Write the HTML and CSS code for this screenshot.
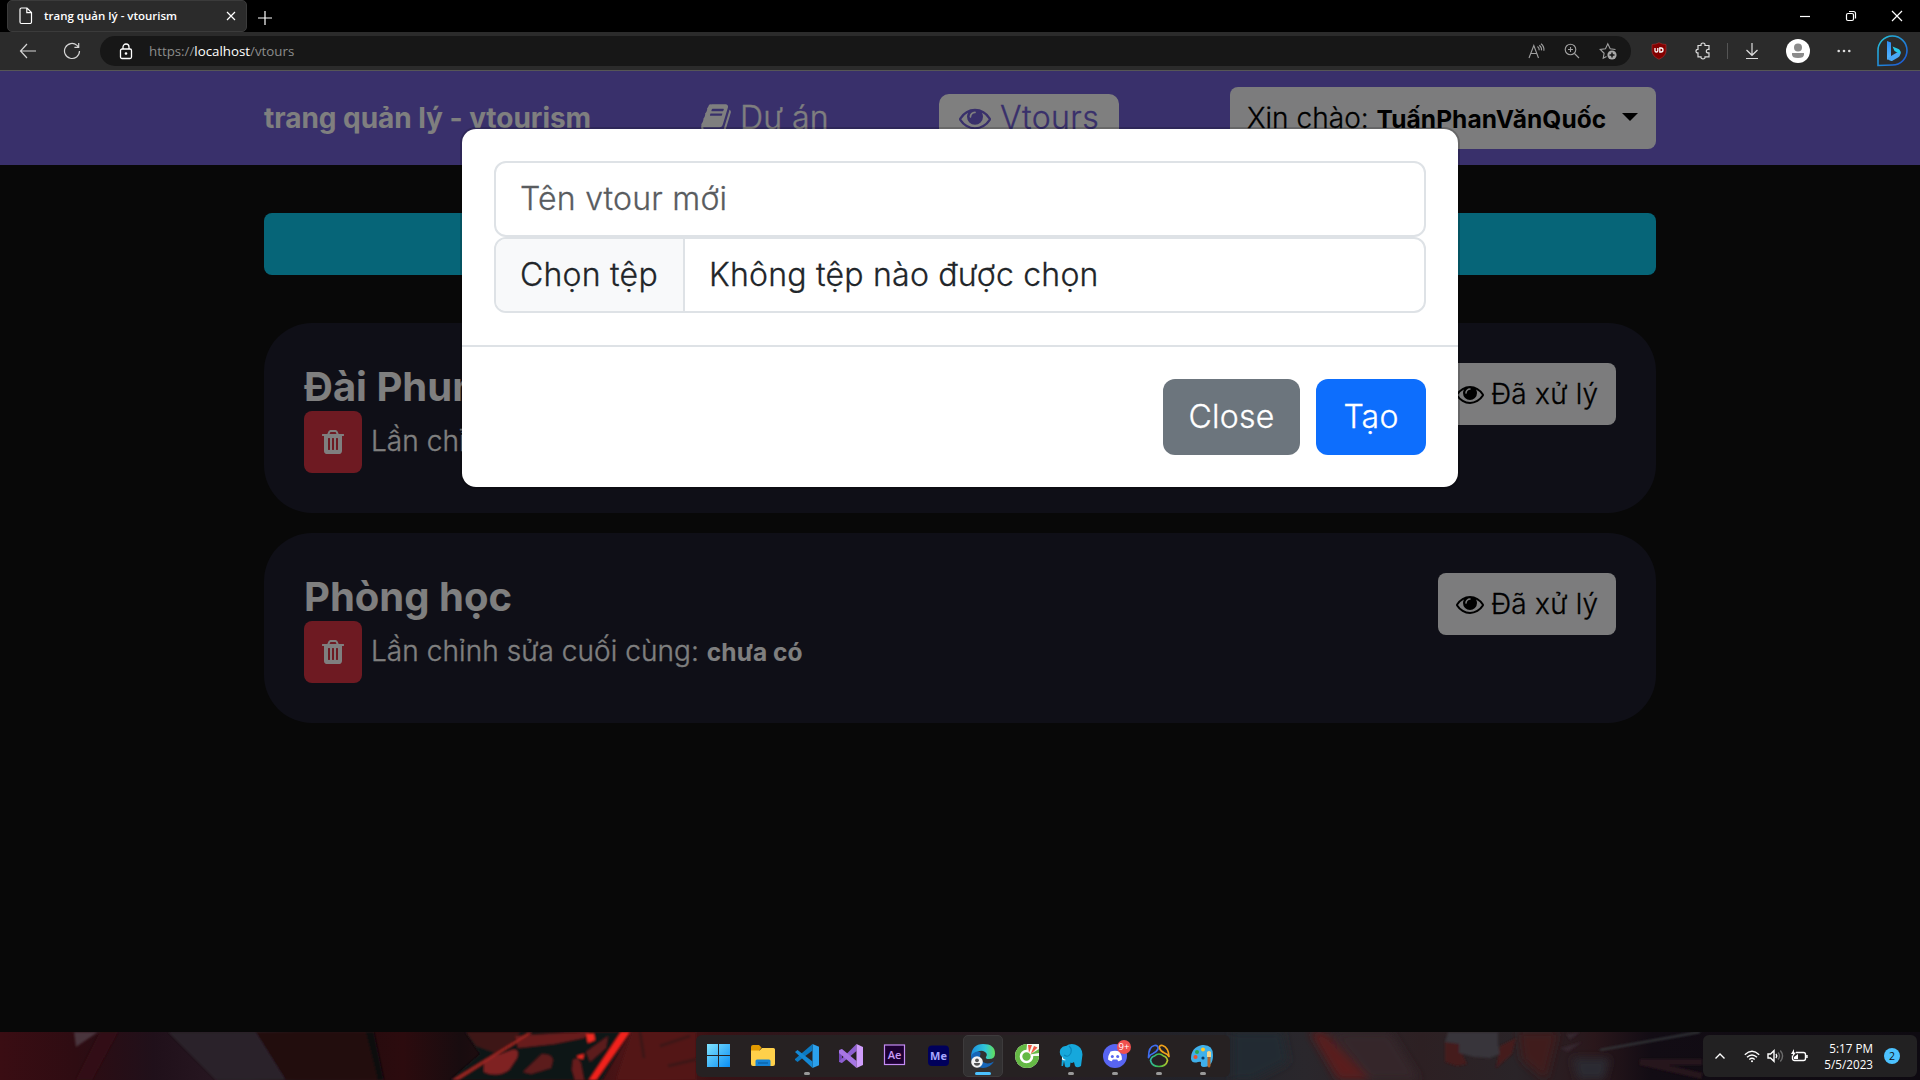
FILE: index.html
```
<!DOCTYPE html>
<html lang="vi">
<head>
<meta charset="utf-8">
<title>trang quản lý - vtourism</title>
<link rel="stylesheet" href="styles.css">
</head>
<body>
<svg class="defs" aria-hidden="true">
  <symbol id="eye" viewBox="0 0 1792 1792"><path d="M1664 960q-152-236-381-353 61 104 61 225 0 185-131.500 316.500t-316.500 131.500-316.500-131.500-131.500-316.500q0-121 61-225-229 117-381 353 133 205 333.500 326.500t434.500 121.500 434.500-121.500 333.500-326.500zm-720-384q0-20-14-34t-34-14q-125 0-214.500 89.500t-89.500 214.500q0 20 14 34t34 14 34-14 14-34q0-86 61-147t147-61q20 0 34-14t14-34zm848 384q0 34-20 69-140 230-376.500 368.500t-499.500 138.500-499.500-139-376.500-368q-20-35-20-69t20-69q140-229 376.500-368t499.500-139 499.500 139 376.500 368q20 35 20 69z"/></symbol>
  <symbol id="trash" viewBox="192 0 1408 1792"><path d="M704 1376v-704q0-14-9-23t-23-9h-64q-14 0-23 9t-9 23v704q0 14 9 23t23 9h64q14 0 23-9t9-23zm256 0v-704q0-14-9-23t-23-9h-64q-14 0-23 9t-9 23v704q0 14 9 23t23 9h64q14 0 23-9t9-23zm256 0v-704q0-14-9-23t-23-9h-64q-14 0-23 9t-9 23v704q0 14 9 23t23 9h64q14 0 23-9t9-23zm-544-992h448l-48-117q-7-9-17-11h-317q-10 2-17 11zm928 32v64q0 14-9 23t-23 9h-96v948q0 83-47 143.500t-113 60.500h-832q-66 0-113-58.500t-47-141.500v-952h-96q-14 0-23-9t-9-23v-64q0-14 9-23t23-9h309l70-167q15-37 54-63t79-26h320q40 0 79 26t54 63l70 167h309q14 0 23 9t9 23z"/></symbol>
  <symbol id="book" viewBox="64 0 1664 1792"><path d="M1703 478q40 57 18 129l-275 906q-19 64-76.500 107.500t-122.500 43.500h-923q-77 0-148.500-53.500t-99.500-131.500q-24-67-2-127 0-4 3-27t4-37q1-8-3-21.500t-3-19.500q2-11 8-21t16.500-23.500 16.500-23.500q23-38 45-91.500t30-91.500q3-10 .5-30t-.5-28q3-11 17-28t17-23q21-36 42-92t25-90q1-9-2.500-32t.5-28q4-13 22-30.500t22-22.500q19-26 42.500-84.500t27.500-96.500q1-8-3-25.500t-2-26.500q2-8 9-18t18-23 17-21q8-12 16.500-30.500t15-35 16-36 19.500-32 26.500-23.500 36-11.500 47.500 5.500l-1 3q38-9 51-9h761q74 0 114 56t18 130l-274 906q-36 119-71.500 153.500t-128.500 34.500h-869q-27 0-38 15-11 16-1 43 24 70 144 70h923q29 0 56-15.500t35-41.500l300-987q7-22 5-57 38 15 59 43zm-1064 2q-4 13 2 22.500t20 9.500h608q13 0 25.500-9.500t16.500-22.500l21-64q4-13-2-22.500t-20-9.500h-608q-13 0-25.500 9.500t-16.500 22.500zm-83 256q-4 13 2 22.500t20 9.500h608q13 0 25.500-9.500t16.500-22.500l21-64q4-13-2-22.500t-20-9.500h-608q-13 0-25.500 9.500t-16.500 22.500z"/></symbol>
</svg>

<div class="browser">
  <div class="tabstrip">
    <div class="tab">
      <svg class="tab-file" width="14" height="18" viewBox="0 0 14 18"><path d="M2.500 1h5.500l4.500 4.500v9.500a1.500 1.500 0 0 1-1.500 1.500h-8.500a1.500 1.500 0 0 1-1.500-1.500v-12.500a1.500 1.500 0 0 1 1.500-1.500zM7.800 1v4.700h4.700"/></svg>
      <span class="tab-title">trang quản lý - vtourism</span>
      <svg class="tab-close" width="10" height="10" viewBox="0 0 10 10"><path d="M1 1l8 8M9 1l-8 8"/></svg>
    </div>
    <svg class="newtab" width="16" height="16" viewBox="0 0 16 16"><path d="M8 1v14M1 8h14"/></svg>
    <div class="winctl">
      <svg width="12" height="12" viewBox="0 0 12 12"><path d="M1 6.500h10"/></svg>
      <svg width="12" height="12" viewBox="0 0 12 12"><rect x="1.500" y="3.500" width="7" height="7" rx="1.500"/><path d="M4 1.500h4.500a2 2 0 0 1 2 2v5"/></svg>
      <svg width="12" height="12" viewBox="0 0 12 12"><path d="M1 1l10 10M11 1l-10 10"/></svg>
    </div>
  </div>
  <div class="toolbar">
    <svg class="nav-back" width="18" height="16" viewBox="0 0 18 16"><path d="M8 1L1.500 8l6.500 7M1.500 8h15.500"/></svg>
    <svg class="nav-reload" width="18" height="18" viewBox="0 0 18 18"><path d="M16.500 9a7.500 7.500 0 1 1-2.500-5.600l1.500 1.600M15.700 1v4.300h-4.300"/></svg>
    <div class="omnibox">
      <svg class="lock" width="14" height="17" viewBox="0 0 14 17"><rect x="1.500" y="6" width="11" height="9.500" rx="1.500"/><path d="M4 6v-2a3 3 0 0 1 6 0v2"/><circle cx="7" cy="10.500" r=".7"/></svg>
      <span class="url">https://<b>localhost</b>/vtours</span>
      <div class="omni-icons">
        <svg width="17" height="16" viewBox="0 0 17 16"><path d="M1 15L5.800 2.500 10.500 15M2.800 10.500h6M9.500 3.500q2 1.500 1.700 3.700M11.300 2.200q2.600 2 2.200 5.200M13 .8q3.400 2.700 2.900 7"/></svg>
        <svg width="16" height="16" viewBox="0 0 16 16"><circle cx="6.500" cy="6.500" r="5.300"/><path d="M10.500 10.500l4.500 4.500M6.500 4v5M4 6.500h5"/></svg>
        <svg width="18" height="18" viewBox="0 0 18 18"><path d="M7.500 14.500L4.200 16.300l.9-5L1.200 7.500l5.300-.8L8.800 1.800l2.400 4.900 5.300.8"/><circle class="dot" cx="13" cy="13" r="4.600"/><path class="cut" d="M13 10.500v5M10.500 13h5"/></svg>
      </div>
    </div>
    <div class="tools">
      <svg width="16" height="18" viewBox="0 0 16 18"><path d="M8 .7Q11 2.500 15 2.500V9q0 5-7 8.300Q1 14 1 9V2.500Q5 2.500 8 .7z" fill="#830000" stroke="#a33" stroke-width=".6"/><path d="M4 6v2.700q0 1.300 1.400 1.300t1.400-1.300V6M8.800 6v4h1.200q2 0 2-2t-2-2z" fill="none" stroke="#fff" stroke-width="1.300"/></svg>
      <svg class="line puzzle" width="16" height="18" viewBox="0 0 16 18"><path d="M3 3.500h3q-.3-2.500 2-2.500t2 2.500h4v4q-2.700-.3-2.700 1.700t2.700 1.700v4h-4q.2 2-2 2t-2-2H3v-4Q1 11 1 9.200t2-1.800z"/></svg>
      <i class="sep"></i>
      <svg class="line download" width="14" height="18" viewBox="0 0 14 18"><path d="M7 1v12M1.500 8L7 13.300 12.500 8M1 16.500h12"/></svg>
      <svg class="avatar" width="24" height="24" viewBox="0 0 24 24"><circle cx="12" cy="12" r="12" fill="#fff"/><circle cx="12" cy="8.500" r="4" fill="#8b8b8b"/><path d="M6 14h12v1.500q0 3.500-6 3.500t-6-3.500z" fill="#8b8b8b"/></svg>
      <svg class="more" width="14" height="4" viewBox="0 0 14 4" fill="#ddd"><circle cx="1.700" cy="2" r="1.300"/><circle cx="7" cy="2" r="1.300"/><circle cx="12.300" cy="2" r="1.300"/></svg>
      <svg class="bing" width="32" height="32" viewBox="0 0 32 32">
        <defs><linearGradient id="bg1" x1="0" y1="0" x2="1" y2="1"><stop offset="0" stop-color="#26c6da"/><stop offset="1" stop-color="#1b4fd6"/></linearGradient><linearGradient id="bg2" x1="0" y1="0" x2="0" y2="1"><stop offset="0" stop-color="#2b8cf5"/><stop offset="1" stop-color="#57b8ff"/></linearGradient></defs>
        <path d="M2 30.500V16A14.500 14.500 0 1 1 16.500 30z" fill="none" stroke="url(#bg1)" stroke-width="1.600"/>
        <path d="M11 6l4 1.500v14L11 25z" fill="url(#bg2)"/><path d="M11 23l4-2 6-3.500 3.500-1q.5 4-2.500 6l-6 3.500q-3 .5-5-3z" fill="#4aa8f5"/><path d="M16.500 11.500l6 2.500q2.500 1.500 2 4.500-1 .8-2.500-.5l-3.500-2z" fill="#27c9e8"/>
      </svg>
    </div>
  </div>
</div>

<div class="page">
  <header class="topbar">
    <div class="container bar">
      <span class="brand">trang quản lý - vtourism</span>
      <a class="link"><svg class="ic-book"><use href="#book"/></svg><span>Dự án</span></a>
      <a class="link active"><svg class="ic-eye"><use href="#eye"/></svg><span>Vtours</span></a>
      <button class="btn light user">Xin chào: <strong>TuấnPhanVănQuốc</strong><i class="caret"></i></button>
    </div>
  </header>
  <main class="container list">
    <button class="btn create"></button>
    <article class="card">
      <div>
        <h2>Đài Phun Nước</h2>
        <div class="meta"><button class="btn danger"><svg><use href="#trash"/></svg></button><span>Lần chỉnh sửa cuối cùng: <strong>chưa có</strong></span></div>
      </div>
      <button class="btn light state"><svg><use href="#eye"/></svg>Đã xử lý</button>
    </article>
    <article class="card">
      <div>
        <h2>Phòng học</h2>
        <div class="meta"><button class="btn danger"><svg><use href="#trash"/></svg></button><span>Lần chỉnh sửa cuối cùng: <strong>chưa có</strong></span></div>
      </div>
      <button class="btn light state"><svg><use href="#eye"/></svg>Đã xử lý</button>
    </article>
  </main>
  <div class="backdrop">
    <div class="modal">
      <div class="modal-body">
        <div class="field name">Tên vtour mới</div>
        <div class="field file"><span class="pick">Chọn tệp</span><span class="picked">Không tệp nào được chọn</span></div>
      </div>
      <div class="modal-footer">
        <button class="mbtn grey">Close</button>
        <button class="mbtn blue">Tạo</button>
      </div>
    </div>
  </div>
</div>

<div class="taskbar">
  <svg class="wall" width="1920" height="48" viewBox="0 0 1920 48" preserveAspectRatio="none">
    <defs>
      <linearGradient id="w"><stop offset="0" stop-color="#3a0d13"/><stop offset=".04" stop-color="#2e0c12"/><stop offset=".08" stop-color="#20101a"/><stop offset=".13" stop-color="#2a1a24"/><stop offset=".155" stop-color="#1d0a0d"/><stop offset=".21" stop-color="#2c0b0e"/><stop offset=".24" stop-color="#180c0f"/><stop offset=".3" stop-color="#3a0f10"/><stop offset=".34" stop-color="#55171a"/><stop offset=".37" stop-color="#3a1214"/><stop offset=".4" stop-color="#30151a"/><stop offset=".62" stop-color="#22232a"/><stop offset=".68" stop-color="#2a272c"/><stop offset=".74" stop-color="#2d2023"/><stop offset=".79" stop-color="#2a2428"/><stop offset=".83" stop-color="#2a171b"/><stop offset=".86" stop-color="#120c14"/><stop offset="1" stop-color="#0e0a11"/></linearGradient>
      <filter id="soft"><feGaussianBlur stdDeviation="1"/></filter>
      <filter id="softer"><feGaussianBlur stdDeviation="4"/></filter>
    </defs>
    <rect width="1920" height="48" fill="url(#w)"/>
    <g filter="url(#soft)">
      <path d="M74 0h24L76 15zM92 20l12-10L80 46z" fill="#4a363c"/>
      <path d="M100 0h18L92 48H76z" fill="#330a12"/>
      <path d="M168 0h88l30 48h-70z" fill="#2b202b"/>
      <path d="M256 0h110l14 48h-94z" fill="#240a0c"/>
      <path d="M366 0h8l10 48h-6z" fill="#0b0710"/>
      <path d="M465 0h165l-28 48H450l30-26z" fill="#0c1315"/>
      <path d="M466 0h54l-8 12-14 10-22-8z" fill="#3c1416"/>
      <path d="M484 28l28-10q8-2 5 8l-8 12q-12 8-25 2z" fill="#7f2124"/>
      <path d="M542 22q10 0 11 6l-2 8-20 6-8-2z" fill="#5c1a1c"/>
      <path d="M515 4l65-4h10l-6 6-30 6-36 4z" fill="#671a1c"/>
      <path d="M573 28q6-4 8 4l3 16h-9l-3-10z" fill="#671a1c"/>
      <path d="M452 48L528 1h4L458 48z" fill="#9c2822"/>
      <path d="M586 20L608 4l-2 12-16 14z" fill="#5c1a1c"/>
      <path d="M589 48L621 0h9L596 48z" fill="#f2231a"/>
      <path d="M586 2l8 0 1 6-7 3zM577 24l7-2-1 5-5-1z" fill="#f02a20"/>
      <path d="M632 0h64v48h-80z" fill="#521517"/>
      <path d="M640 0l4 26M660 14l30-10M668 34l34-8" stroke="#3c1213" stroke-width="3"/>
    </g>
    <g filter="url(#softer)">
      <path d="M1232 0h50l6 30-36 18h-20z" fill="#242a33"/>
      <path d="M1310 0h14l46 48h-32z" fill="#5a1d1f"/>
      <path d="M1330 0h60l30 48h-50z" fill="#35262a"/>
      <path d="M1518 0h40l-12 48-24-20z" fill="#3f1a1e"/>
      <path d="M1572 26h38l-6 22h-26z" fill="#2c2b33"/>
    </g>
    <g filter="url(#soft)">
      <path d="M1445 10l16 2 2 12 4 8-10 2-12-4zM1500 14l16-8-4 16-16 14z" fill="#451a1d"/>
      <path d="M1448 0h50v12l2 10-10 4-16-1-15-4v-9l-14-2z" fill="#37353a"/>
      <path d="M1566 2l14-2-10 8zM1560 16l22-6-14 10z" fill="#35262e"/>
      <path d="M1600 18L1700 0" stroke="#34373b" stroke-width="2"/>
      <path d="M1702 30h-62l62 14" fill="none" stroke="#28131c" stroke-width="6"/>
    </g>
  </svg>
  <div class="dock">
    <div class="app"><svg viewBox="0 0 24 24"><defs><linearGradient id="win" x1="0" y1="0" x2="1" y2="1"><stop offset="0" stop-color="#7fe3ff"/><stop offset="1" stop-color="#0a8df2"/></linearGradient></defs><path d="M0 0h11v11h-11zM12 0h11v11h-11zM0 12h11v11h-11zM12 12h11v11h-11z" fill="url(#win)"/></svg></div>
    <div class="app"><svg viewBox="0 0 24 24"><path d="M0 3q0-2 2-2h6l2.500 2.500L8 7H0z" fill="#e29a00"/><path d="M0 6.500h8.500L11 4h11.500q1.500 0 1.500 1.500V20q0 2-2 2H2q-2 0-2-2z" fill="#ffd04a"/><path d="M4.500 22v-5q0-1.500 1.500-1.500h12q1.500 0 1.500 1.500v5z" fill="#1583d6"/><path d="M7 19h10" stroke="#0b5ea3" stroke-width="1.200"/></svg></div>
    <div class="app on"><svg viewBox="0 0 24 24"><path d="M17.500 0L24 2.800v18.400L17.500 24z" fill="#2ba0ec"/><path d="M17.500 0v6.500L2.500 18 0 16v-1z" fill="#0b78c0"/><path d="M0 8l2.500-2 15 11.500V24z" fill="#1488d4"/></svg></div>
    <div class="app"><svg viewBox="0 0 24 24"><path d="M0 6l3-1v14l-3-1z" fill="#7347b8"/><path d="M17.500 0v7L3 19l-3-1.500z" fill="#8d5fd0"/><path d="M0 6.500L3 5l14.500 12v7L0 9z" fill="#a776e4"/><path d="M17.500 0L24 3v18l-6.500 3z" fill="#cf9dfb"/></svg></div>
    <div class="app"><svg viewBox="0 0 24 24"><rect x="1.500" y="1" width="20" height="19.500" fill="#1d0033" stroke="#c58cf5" stroke-width="1.200"/><text x="11.500" y="15" class="t-ae">Ae</text></svg></div>
    <div class="app"><svg viewBox="0 0 24 24"><rect x="1" y="1.500" width="21" height="20.500" rx="4" fill="#00005b"/><text x="11.500" y="15.800" class="t-me">Me</text></svg></div>
    <div class="app current"><svg viewBox="0 0 24 24"><defs><linearGradient id="ed"><stop offset="0" stop-color="#1b8de0"/><stop offset=".6" stop-color="#30c8d8"/><stop offset="1" stop-color="#63e05a"/></linearGradient></defs><path d="M0 12Q1 0 12 0q12 0 12 9.500 0 5.500-6 5.500-4 0-3-2 2-3-1-5-4-2.500-9 .5Q1 10.500 0 14z" fill="url(#ed)"/><path d="M0 12q3-5 8-4.500 2 .5 1.500 2.500-2 5 2.500 8t11-.5Q19 24 12 24 0 23 0 12z" fill="#1565b8"/><circle cx="6" cy="18" r="5.800" fill="#f3f3f3"/><circle cx="6" cy="16.300" r="1.900" fill="#555"/><path d="M3 19h6q0 2.700-3 2.700T3 19z" fill="#555"/></svg></div>
    <div class="app"><svg viewBox="0 0 24 24"><path d="M12 0H24V12A12 12 0 1 1 12 0z" fill="#f4faf0"/><path d="M12 0L11 12l13 0A12 12 0 1 1 12 0z" fill="#65b945"/><circle cx="11.500" cy="12.500" r="5.500" fill="#65b945" stroke="#fff" stroke-width="2.600"/><path d="M13 1l4 0-3 8zM19 2l3.500 1.500-7 7z" fill="#ef5a45"/><path d="M15 10.500L24 5v4z" fill="#65b945"/></svg></div>
    <div class="app on"><svg viewBox="0 0 24 24"><path d="M7 2q4-3 9-1.500 7 2 7.500 10L22 22q-4 2.500-6 0l-1-4q-2 1.500-3.500.5L11 22.500q-3 2-5 0L5 17l-1 5H2.500L3 13Q-.5 10 1.500 5 4 1.500 7 2z" fill="#16a8dc"/><path d="M10 2q4.500 4 .5 9-2 2.500-5.500 0" stroke="#0a86bb" stroke-width="1.100" fill="none"/><path d="M3 12.500q1 3 4 3.500-3 .8-4-.8z" fill="#fff"/></svg></div>
    <div class="app on"><svg viewBox="0 0 24 24"><circle cx="12" cy="12" r="12" fill="#5865f2"/><path d="M7.500 7.500q4.500-1.500 9 0 2.500 4 2.500 8-2 1.500-3.800 1.700l-1-1.700h-4.400l-1 1.700Q7 17 5 15.500q0-4 2.500-8z" fill="#fff"/><circle cx="9.300" cy="12.500" r="1.500" fill="#5865f2"/><circle cx="14.700" cy="12.500" r="1.500" fill="#5865f2"/></svg><span class="badge">9+</span></div>
    <div class="app on"><svg viewBox="0 0 24 24" fill="none" stroke-width="1.700" stroke-linejoin="round"><defs><linearGradient id="nv"><stop offset="0" stop-color="#2fb6a0"/><stop offset=".5" stop-color="#3cbf4a"/><stop offset="1" stop-color="#b9c22b"/></linearGradient></defs><path d="M1.500 13.500Q1.500 2.500 7.500 1.500q4-.5 3.500 3.500-1.500 3-5 4.500-3 1-4.500 4z" stroke="#3e6df0"/><path d="M22 12.500Q21.500 3.500 15.500 1.500 12 1 12.500 4q1 3.500 5 5 3 1 4.500 3.500z" stroke="#f2a31a"/><path d="M3.500 16.500q1-4 4-4.500 2-2 4.500-2t4.500 2q3 .5 4 4.500-1.500 6-8.500 6t-8.500-6z" stroke="url(#nv)"/></svg></div>
    <div class="app on"><svg viewBox="0 0 24 24"><path d="M11 1q11-1 11 10 0 12-9 12-4 0-3-4 .5-2-3-1-6 2-7-3Q0 3 11 1z" fill="#3fb0ea"/><circle cx="6" cy="8" r="2" fill="#2fa84e"/><circle cx="12" cy="5.500" r="2" fill="#ffc928"/><circle cx="4.500" cy="13" r="2.100" fill="#e8542f"/><circle cx="12" cy="14" r="1.600" fill="#0b3c68"/><path d="M16 8q2-2 4 0v5h-4z" fill="#f2d38a"/><path d="M16.500 13h3v9q-1.500 3-3 0z" fill="#b0652c"/></svg></div>
  </div>
  <div class="tray">
    <svg width="12" height="8" viewBox="0 0 12 8"><path d="M1.500 6.500L6 2l4.500 4.500"/></svg>
    <svg class="wifi" width="16" height="13" viewBox="0 0 16 13"><path d="M.8 4.700q7.200-6.700 14.400 0M3 7.200q5-4.600 10 0M5.300 9.500q2.700-2.300 5.400 0"/><circle cx="8" cy="11.300" r="1"/></svg>
    <svg class="vol" width="17" height="14" viewBox="0 0 17 14"><path d="M1 5h2.500L7 1.700v10.600L3.500 9H1z"/><path d="M9 5q1.500 2 0 4"/><path class="dim" d="M11 3.500q3 3.500 0 7M13.300 1.500q4.500 5.500 0 11"/></svg>
    <svg class="bat" width="17" height="14" viewBox="0 0 17 14"><path d="M5 3.500h7.500a2 2 0 0 1 2 2v4a2 2 0 0 1-2 2h-9a2 2 0 0 1-2-2v-3M16 6v3"/><path class="solid" d="M3 0L0 5h2L1.500 8 5 3.500H3zM3 10V8l4-3v5z"/></svg>
    <div class="clock"><span>5:17 PM</span><span>5/5/2023</span></div>
    <span class="count">2</span>
  </div>
</div>
</body>
</html>
```
FILE: styles.css
```
* { box-sizing: border-box; }
body {
  margin: 0;
  width: 1920px;
  height: 1080px;
  overflow: hidden;
  background: #000;
  color: #fff;
  font-family: "Inter", "Liberation Sans", sans-serif;
  display: flex;
  flex-direction: column;
}
svg { display: block; flex: none; }
button { font-family: inherit; border: 0; font-weight: inherit; letter-spacing: inherit; }
.defs { position: absolute; width: 0; height: 0; }

/* browser chrome */
.browser { height: 71px; flex: none; font-family: "Open Sans", "Noto Sans", sans-serif; }
.tabstrip { height: 32px; display: flex; align-items: center; padding-left: 7px; }
.tab {
  width: 240px; height: 32px; padding: 0 10px 0 11px;
  display: flex; align-items: center;
  background: #2b2b2b; border: 1px solid #3b3b3b; border-radius: 5px;
}
.tab svg, .newtab, .winctl svg { fill: none; stroke: #fff; stroke-width: 1.2; }
.tab-title { margin-left: 11px; flex: 1; font-size: 11.5px; line-height: 16px; padding-bottom: 1px; font-weight: 600; white-space: nowrap; }
.newtab { margin: 3px 0 0 10px; }
.winctl { margin-left: auto; display: flex; gap: 34px; padding-right: 17px; }
.toolbar {
  height: 39px; display: flex; align-items: center;
  background: #2b2b2b; border-bottom: 1px solid #565656;
}
.nav-back, .nav-reload { fill: none; stroke: #d6d6d6; stroke-width: 1.2; }
.nav-back { margin-left: 19px; }
.nav-reload { margin-left: 26px; }
.omnibox {
  margin-left: 19px; width: 1531px; height: 30px; padding: 0 14px 0 19px;
  display: flex; align-items: center;
  background: #171717; border-radius: 15px;
}
.lock { fill: none; stroke: #fff; stroke-width: 1.3; }
.url { margin-left: 16px; font-size: 13.3px; color: #8c8c8c; }
.url b { font-weight: 400; color: #fff; }
.omni-icons { margin-left: auto; display: flex; align-items: center; gap: 19px; }
.omni-icons svg { fill: none; stroke: #a0a0a0; stroke-width: 1.1; }
.omni-icons .dot { fill: #a8a8a8; stroke: none; }
.omni-icons .cut { stroke: #171717; stroke-width: 1.5; }
.tools { display: flex; align-items: center; padding-left: 20px; }
.tools .line { fill: none; stroke: #dcdcdc; stroke-width: 1.2; }
.puzzle { margin-left: 28px; }
.sep { width: 1px; height: 16px; margin-left: 16px; background: #555; }
.download { margin-left: 17px; }
.avatar { margin-left: 27px; }
.more { margin-left: 27px; }
.bing { margin-left: 25px; }

/* page */
.page {
  position: relative; height: 961px; flex: none; background: #101010; overflow: hidden;
  font-weight: 300; letter-spacing: .23px; -webkit-text-stroke: .3px currentColor;
}
.container { width: 1392px; margin: 0 auto; }
.topbar { height: 94px; background: #7260d6; }
.bar { height: 100%; display: flex; align-items: center; }
.brand { width: 417px; font-size: 28px; font-weight: 700; letter-spacing: -.04px; line-height: 42px; white-space: nowrap; }
.brand, .card h2, strong { -webkit-text-stroke: 0; }
.link { display: flex; align-items: center; gap: 9px; padding: 0 20px; font-size: 32px; line-height: 48px; border-radius: 10px; white-space: nowrap; }
.link:not(.active) { width: 168px; margin-right: 90px; }
.link:not(.active) span { letter-spacing: .12px; }
.link.active { width: 180px; background: #fff; color: #7260d6; letter-spacing: .4px; }
.ic-book { width: 30px; height: 32px; fill: currentColor; }
.ic-eye { width: 32px; height: 32px; fill: currentColor; }
.btn {
  height: 62px; padding: 0 18px; border-radius: 8px;
  display: flex; align-items: center;
  font-size: 28px; line-height: 42px; white-space: pre;
}
.light { background: #f8f9fa; color: #000; }
strong { font-size: 24.5px; font-weight: 700; letter-spacing: .07px; }
.user { width: 426px; margin-left: auto; padding-left: 17px; letter-spacing: .03px; }
.user strong { position: relative; top: 1px; }
.caret { margin-left: auto; border: 8.4px solid transparent; border-top-color: #000; border-bottom: 0; margin-top: -3px; }
.list { padding-top: 48px; display: flex; flex-direction: column; }
.create { width: 100%; background: #0dcaf0; margin-bottom: 48px; }
.card {
  height: 190px; margin-bottom: 20px; padding: 40px;
  display: flex; justify-content: space-between; align-items: flex-start;
  background: #1e1e2e; border-radius: 48px;
}
.card h2 { margin: 0; font-size: 40px; line-height: 48px; font-weight: 700; letter-spacing: 0; }
.meta { display: flex; align-items: center; gap: 9px; font-size: 28px; white-space: nowrap; letter-spacing: .06px; }
.meta span { padding-bottom: 2px; }
.danger { background: #dc3545; width: 58px; }
.danger svg { width: 22px; height: 28px; fill: #fff; }
.state { width: 178px; gap: 7px; }
.state svg { width: 28px; height: 28px; }

/* modal */
.backdrop { position: absolute; inset: 0; background: rgba(0, 0, 0, .5); padding-top: 56px; }
.modal {
  width: 1000px; height: 362px; margin: 0 auto; color: #212529;
  background: #fff; background-clip: padding-box;
  border: 2px solid rgba(0, 0, 0, .175); border-radius: 16px;
  font-size: 32px; line-height: 48px;
}
.modal-body { padding: 32px; height: 216px; }
.field { height: 76px; border: 2px solid #dee2e6; border-radius: 12px; display: flex; align-items: center; overflow: hidden; }
.name { padding-left: 24px; color: #595c5f; }
.pick { width: 189px; height: 72px; padding: 12px 24px; background: #f8f9fa; border-right: 2px solid #dee2e6; white-space: nowrap; }
.picked { padding-left: 24px; }
.modal-footer { display: flex; justify-content: flex-end; gap: 16px; padding: 32px; border-top: 2px solid #dee2e6; }
.mbtn { height: 76px; padding: 0; border-radius: 12px; color: #fff; font-size: 32px; line-height: 48px; }
.grey { width: 137px; background: #6c757d; }
.blue { width: 110px; background: #0d6efd; }

/* taskbar */
.taskbar { position: relative; height: 48px; flex: none; display: flex; align-items: center; font-family: "Open Sans", "Noto Sans", sans-serif; }
.wall { position: absolute; inset: 0; }
.dock { position: relative; margin-left: 696px; width: 534px; height: 42px; padding-left: 1px; display: flex; background: #262122; border-radius: 6px; }
.app { position: relative; width: 44px; height: 42px; padding: 9px 10px; }
.app svg { width: 24px; height: 24px; }
.app.on::after, .app.current::after {
  content: ""; position: absolute; left: 19px; bottom: 2px;
  width: 6px; height: 3px; border-radius: 2px; background: #999;
}
.app.current::before { content: ""; position: absolute; inset: 0 2px; background: #323031; border: 1px solid #3d3b3c; border-radius: 5px; }
.app.current svg { position: relative; }
.app.current::after { left: 14px; width: 16px; background: #4cc2ff; }
.t-ae, .t-me { font: 600 11px "Open Sans", sans-serif; fill: #c99bf5; text-anchor: middle; }
.t-me { fill: #a6a6ff; font-weight: 700; font-size: 11px; }
.badge {
  position: absolute; left: 24px; top: 5px; width: 14px; height: 14px; border-radius: 7px;
  background: #f0504f; font-size: 9.5px; line-height: 14px; text-align: center;
}
.tray {
  position: relative; margin-left: auto; margin-right: 3px; width: 214px; height: 42px;
  padding: 0 17px 0 11px; display: flex; align-items: center;
  background: #222122; border-radius: 6px;
}
.tray svg { fill: none; stroke: #fff; stroke-width: 1.4; }
.wifi { margin-left: 18px; }
.wifi circle, .bat .solid { fill: #fff; stroke: none; }
.vol { margin-left: 7px; }
.vol .dim { stroke: #6c6c6c; }
.bat { margin-left: 7px; }
.clock { margin-left: auto; margin-right: 11px; display: flex; flex-direction: column; align-items: flex-end; font-size: 11.7px; line-height: 16px; padding-bottom: 1px; white-space: nowrap; }
.count { width: 16px; height: 16px; border-radius: 8px; background: #4cc2ff; color: #111; font-size: 10.5px; line-height: 16px; text-align: center; }
```
